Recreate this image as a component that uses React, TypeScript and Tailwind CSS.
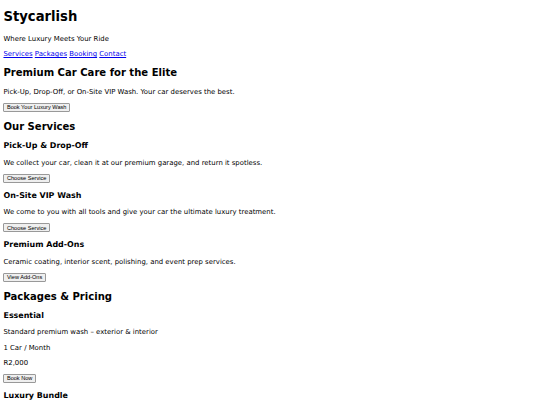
import React from 'react';

const h2Cls = "text-[10.05px] leading-[12.124px] font-bold my-[8.625px]";
const h3Cls = "text-[7.95px] leading-[9.093px] font-bold my-[8.106px]";
const pCls = "my-[6.928px]";
const btnCls =
  "inline-block font-['Liberation_Sans',Arial,sans-serif] text-[5.6px] leading-[6.495px] px-[2.464px] py-[0.299px] bg-[#efefef] text-black border border-[#999999] rounded-[1px] cursor-pointer";

const services = [
  { title: 'Pick-Up & Drop-Off', text: 'We collect your car, clean it at our premium garage, and return it spotless.', action: 'Choose Service' },
  { title: 'On-Site VIP Wash', text: 'We come to you with all tools and give your car the ultimate luxury treatment.', action: 'Choose Service' },
  { title: 'Premium Add-Ons', text: 'Ceramic coating, interior scent, polishing, and event prep services.', action: 'View Add-Ons' },
];

const packages = [
  { name: 'Essential', text: 'Standard premium wash – exterior & interior', freq: '1 Car / Month', price: 'R2,000' },
  { name: 'Luxury Bundle', text: 'Full detail, waxing, interior shampoo & scent', freq: '2 Cars / Month', price: 'R4,500' },
];

const App: React.FC = () => {
  return (
    <div className="min-h-screen bg-white text-black font-['DejaVu_Sans',sans-serif] text-[6.928px] leading-[8.227px] px-[3.464px]">
      <header>
        <h1 className="text-[13.2px] leading-[16.454px] font-bold my-[9.284px]">Stycarlish</h1>
        <p className={pCls}>Where Luxury Meets Your Ride</p>
        <nav>
          <a href="#services" className="text-[#0000ee] underline">Services</a>{' '}
          <a href="#packages" className="text-[#0000ee] underline">Packages</a>{' '}
          <a href="#booking" className="text-[#0000ee] underline">Booking</a>{' '}
          <a href="#contact" className="text-[#0000ee] underline">Contact</a>
        </nav>
      </header>

      <section>
        <h2 className={h2Cls}>Premium Car Care for the Elite</h2>
        <p className={pCls}>Pick-Up, Drop-Off, or On-Site VIP Wash. Your car deserves the best.</p>
        <button className={btnCls}>Book Your Luxury Wash</button>
      </section>

      <section id="services">
        <h2 className={h2Cls}>Our Services</h2>
        {services.map((s) => (
          <div key={s.title}>
            <h3 className={h3Cls}>{s.title}</h3>
            <p className={pCls}>{s.text}</p>
            <button className={btnCls}>{s.action}</button>
          </div>
        ))}
      </section>

      <section id="packages">
        <h2 className={h2Cls}>Packages &amp; Pricing</h2>
        {packages.map((p) => (
          <div key={p.name}>
            <h3 className={h3Cls}>{p.name}</h3>
            <p className={pCls}>{p.text}</p>
            <p className={pCls}>{p.freq}</p>
            <p className={pCls}>{p.price}</p>
            <button className={btnCls}>Book Now</button>
          </div>
        ))}
      </section>
    </div>
  );
};

export default App;
